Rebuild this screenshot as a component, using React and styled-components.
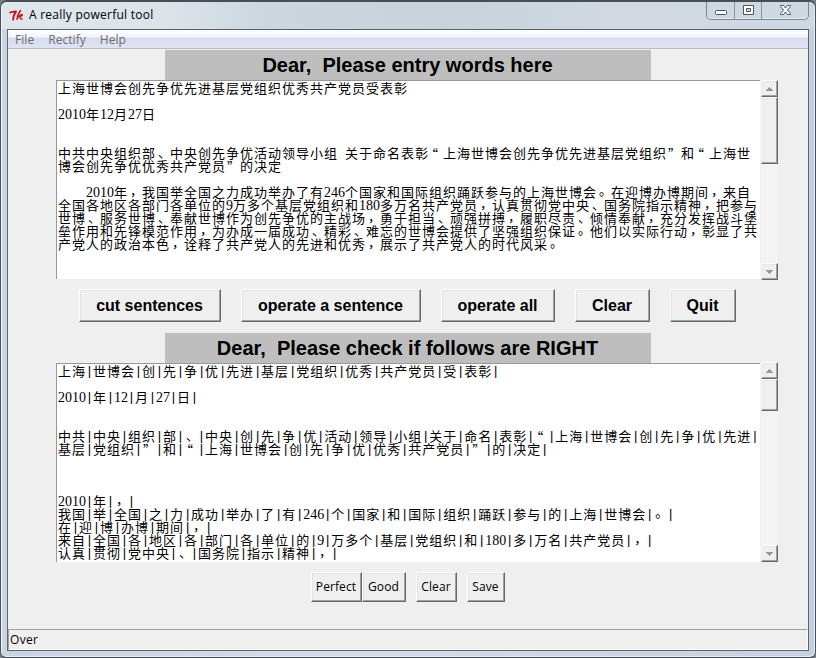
import React from "react";
import styled, { createGlobalStyle } from "styled-components";

const GlobalStyle = createGlobalStyle`
  * { box-sizing: border-box; }
  html, body { margin: 0; padding: 0; overflow: hidden; background: #777f88; }
`;

const Window = styled.div`
  width: 816px;
  height: 658px;
  padding: 0 6px 6px;
  display: flex;
  flex-direction: column;
  background: linear-gradient(90deg, #c9d5e0 0%, #d3dde6 45%, #c5d1dc 100%);
  border: 1px solid #4b525b;
  border-top: 2px solid #4a4d55;
  border-bottom-color: #454b55;
  border-radius: 7px 7px 6px 6px;
  box-shadow: inset 1px 1px 0 #eef4f8, inset -1px -1px 0 #e4edf4;
  font-family: "Open Sans", "Noto Sans", sans-serif;
`;

const TitleBar = styled.header`
  height: 27px;
  flex: none;
  display: flex;
  align-items: flex-start;
  margin: 0 -5px;
  padding-left: 7px;
  border-radius: 5px 5px 0 0;
  background: linear-gradient(90deg, #dfe6ec 0, #dce4ea 20%, #cbd6df 33%, #c7d2dc 55%, #d0d9e2 75%, #ced8e1 100%);
`;

const TitleIcon = styled.svg`
  width: 15px;
  height: 13px;
  margin: 7px 5px 0 0;
`;

const Title = styled.h1`
  flex: 1;
  margin: 0;
  font-size: 12px;
  font-weight: 400;
  line-height: 16px;
  padding-top: 5px;
  color: #000;
  letter-spacing: 0.25px;
`;

const Controls = styled.div`
  display: flex;
  height: 18px;
  margin-right: 5px;
  border: 1px solid #7d8791;
  border-top: 0;
  border-radius: 0 0 5px 5px;
  box-shadow: inset 0 -1px 0 #e3eaf0;
`;

const Control = styled.span`
  width: ${(p) => p.$width}px;
  display: flex;
  justify-content: center;
  padding-left: 1px;
  border-left: ${(p) => (p.$first ? "0" : "1px solid #8b959f")};
`;

const Client = styled.main`
  flex: 1;
  min-height: 0;
  display: flex;
  flex-direction: column;
  background: #efefef;
  border: 1px solid #5c656f;
  border-top-color: #59616a;
`;

const MenuBar = styled.nav`
  height: 19px;
  flex: none;
  display: flex;
  border-bottom: 1px solid #b9bcc4;
  background: linear-gradient(#ffffff 0, #f2f4fa 7px, #d7dcee 8px, #dfe3f2 18px);
`;

const MenuItem = styled.span`
  font-size: 12px;
  line-height: 20px;
  color: #6d6d6d;
  margin-left: ${(p) => p.$gap}px;
  letter-spacing: 0.05px;
`;

const Body = styled.div`
  flex: 1;
  min-height: 0;
  padding-top: 1px;
  display: flex;
  flex-direction: column;
`;

const Banner = styled.h2`
  width: 486px;
  height: 30px;
  flex: none;
  margin: 0 0 0 157px;
  padding-right: 1px;
  background: #bebebe;
  text-align: center;
  white-space: pre;
  font: bold 20px/30px "Liberation Sans", Arial, sans-serif;
  color: #000;
`;

const EditorRow = styled.section`
  display: flex;
  gap: 1px;
  height: 199px;
  flex: none;
  margin-left: 48px;
`;

const Editor = styled.div`
  width: 704px;
  height: 199px;
  background: #fff;
  border-top: 1px solid #989898;
  border-left: 1px solid #989898;
  padding-left: 1px;
  color: #000;
  font: 13px/13px "Noto Sans CJK SC", sans-serif;
`;

const Line = styled.div`
  height: 13px;
  white-space: pre;
  line-height: 13px;
`;

const Wide = styled.span`
  letter-spacing: 1px;
`;

const Glyph = styled.span`
  display: inline-block;
  width: 14px;
  height: 13px;
  text-indent: ${(p) => p.$shift}px;
  vertical-align: top;
  line-height: ${(p) => p.$leading}px;
`;

const Half = styled.span`
  font: 14px/13px "Liberation Serif", serif;
`;

const Bar = styled.span`
  display: inline-block;
  width: 7px;
  height: 13px;
  text-align: center;
  vertical-align: top;
  font: 13px/13px "Liberation Sans", sans-serif;
`;

const HalfSpace = styled.span`
  display: inline-block;
  width: 7px;
`;

const Scroll = styled.div`
  width: 17px;
  height: 200px;
  margin-top: ${(p) => p.$lift}px;
  display: flex;
  flex-direction: column;
  background: repeating-conic-gradient(#ececec 0 25%, #fafafa 0 50%) 0 0 / 2px 2px;
`;

const ScrollButton = styled.span`
  height: 17px;
  flex: none;
  display: flex;
  align-items: center;
  justify-content: center;
  background: #efefef;
  border: 1px solid #fdfdfd;
  border-right-color: #696969;
  border-bottom-color: #696969;
  box-shadow: inset -1px -1px 0 #a0a0a0, inset 1px 1px 0 #e6e6e6;
  margin-top: ${(p) => (p.$end ? "auto" : 0)};
`;

const Thumb = styled(ScrollButton)`
  height: ${(p) => p.$size}px;
`;

const MainButtons = styled.div`
  display: flex;
  gap: 20px;
  margin: 10px 0 11px 71px;
`;

const Button = styled.button`
  width: ${(p) => p.$width}px;
  height: 33px;
  padding: 0 1px 0 0;
  border: 1px solid #fff;
  border-right-color: #696969;
  border-bottom-color: #696969;
  border-radius: 0;
  box-shadow: inset -1px -1px 0 #a0a0a0, inset 1px 1px 0 #e3e3e3;
  background: #efefef;
  color: #000;
  text-align: center;
  white-space: nowrap;
  font: bold 16px/29px "Liberation Sans", Arial, sans-serif;
`;

const SmallButtons = styled.div`
  display: flex;
  margin: 10px 0 0 303px;
`;

const SmallButton = styled(Button)`
  height: 30px;
  margin-left: ${(p) => p.$gap || 0}px;
  font: 12px/26px "Open Sans", sans-serif;
  letter-spacing: 0.1px;
`;

const Status = styled.footer`
  height: 21px;
  flex: none;
  border-top: 1px solid #a0a0a0;
  border-left: 1px solid #a0a0a0;
  border-right: 1px solid #fff;
  border-bottom: 1px solid #fff;
  font-size: 12px;
  line-height: 20px;
  padding-left: 1px;
  color: #000;
  letter-spacing: 0.3px;
`;

const Arrow = ({ down }) => (
  <svg width="7" height="4" viewBox="0 0 7 4" shapeRendering="crispEdges">
    <path d={down ? "M0 0h7L3.5 4z" : "M3.5 0L7 4H0z"} fill="#969696" />
  </svg>
);

const PUNCTUATION = {
  "“": { shift: -4, leading: 15 },
  "”": { shift: 1, leading: 15 },
  "，": { shift: 2, leading: 10 },
  "、": { shift: 2, leading: 11 },
  "。": { shift: 2, leading: 10 },
};

const renderRun = (run, i) => {
  if (run === "|") return <Bar key={i}>|</Bar>;
  if (run === " ") return <HalfSpace key={i}> </HalfSpace>;
  if (/^\d/.test(run)) return <Half key={i}>{run}</Half>;
  const mark = PUNCTUATION[run];
  if (mark) {
    return (
      <Glyph key={i} $shift={mark.shift} $leading={mark.leading}>
        {run}
      </Glyph>
    );
  }
  return <Wide key={i}>{run}</Wide>;
};

const TextArea = ({ lines, thumb, lift = 0 }) => (
  <EditorRow>
    <Editor>
      {lines.map((line, i) => (
        <Line key={i}>
          {(line.match(/\||\x20|\d+|[“”，、。]|[^|\x20\d“”，、。]+/g) || []).map(renderRun)}
        </Line>
      ))}
    </Editor>
    <Scroll $lift={lift}>
      <ScrollButton><Arrow /></ScrollButton>
      <Thumb $size={thumb} />
      <ScrollButton $end><Arrow down /></ScrollButton>
    </Scroll>
  </EditorRow>
);

const SOURCE = [
  "上海世博会创先争优先进基层党组织优秀共产党员受表彰",
  "",
  "2010年12月27日",
  "",
  "",
  "中共中央组织部、中央创先争优活动领导小组 关于命名表彰“上海世博会创先争优先进基层党组织”和“上海世",
  "博会创先争优优秀共产党员”的决定",
  "",
  "    2010年，我国举全国之力成功举办了有246个国家和国际组织踊跃参与的上海世博会。在迎博办博期间，来自",
  "全国各地区各部门各单位的9万多个基层党组织和180多万名共产党员，认真贯彻党中央、国务院指示精神，把参与",
  "世博、服务世博、奉献世博作为创先争优的主战场，勇于担当、顽强拼搏，履职尽责、倾情奉献，充分发挥战斗堡",
  "垒作用和先锋模范作用，为办成一届成功、精彩、难忘的世博会提供了坚强组织保证。他们以实际行动，彰显了共",
  "产党人的政治本色，诠释了共产党人的先进和优秀，展示了共产党人的时代风采。",
];

const RESULT = [
  "上海|世博会|创|先|争|优|先进|基层|党组织|优秀|共产党员|受|表彰|",
  "",
  "2010|年|12|月|27|日|",
  "",
  "",
  "中共|中央|组织|部|、|中央|创|先|争|优|活动|领导|小组|关于|命名|表彰|“|上海|世博会|创|先|争|优|先进|",
  "基层|党组织|”|和|“|上海|世博会|创|先|争|优|优秀|共产党员|”|的|决定|",
  "",
  "",
  "",
  "2010|年|，|",
  "我国|举|全国|之|力|成功|举办|了|有|246|个|国家|和|国际|组织|踊跃|参与|的|上海|世博会|。|",
  "在|迎|博|办博|期间|，|",
  "来自|全国|各|地区|各|部门|各|单位|的|9|万多个|基层|党组织|和|180|多|万名|共产党员|，|",
  "认真|贯彻|党中央|、|国务院|指示|精神|，|",
];

export default function App() {
  return (
    <>
      <GlobalStyle />
      <Window>
        <TitleBar>
          <TitleIcon viewBox="0 0 15 13" fill="none" stroke="#c5131b">
            <path d="M0.8 4.2C1.6 1.8 4 3.6 7.4 2.2C5.4 4.6 4.2 7.5 4 11.4" strokeWidth="1.8" />
            <path d="M12 1.4C9.6 3.5 8.3 7 8 11" strokeWidth="1.4" />
            <path d="M8.4 8.8C10 5.8 13.6 4.6 13.4 6C13 7.4 11 7.4 10.2 7.4C11.2 9.6 12 11 13.6 9.4" strokeWidth="1.3" />
          </TitleIcon>
          <Title>A really powerful tool</Title>
          <Controls>
            <Control $first $width={27}>
              <svg width="13" height="18" viewBox="0 0 13 18">
                <rect x="0.5" y="8.5" width="11" height="4" rx="1" fill="#fff" stroke="#4d535d" />
              </svg>
            </Control>
            <Control $width={27}>
              <svg width="13" height="18" viewBox="0 0 13 18">
                <path d="M1.5 3.5h10v9h-10z M4.5 6.5v3h4v-3z" fill="#fff" fillRule="evenodd" stroke="#4d535d" />
              </svg>
            </Control>
            <Control $width={47}>
              <svg width="13" height="18" viewBox="0 0 13 18">
                <path
                  d="M1.5 3.5h3L6.5 6l2-2.5h3v1L8.5 8l3 3.5v1h-3L6.5 10l-2 2.5h-3v-1L4.5 8l-3-3.5z"
                  fill="#fff"
                  stroke="#4d535d"
                />
              </svg>
            </Control>
          </Controls>
        </TitleBar>
        <Client>
          <MenuBar>
            <MenuItem $gap={7}>File</MenuItem>
            <MenuItem $gap={14}>Rectify</MenuItem>
            <MenuItem $gap={14}>Help</MenuItem>
          </MenuBar>
          <Body>
            <Banner>{"Dear,  Please entry words here"}</Banner>
            <TextArea lines={SOURCE} thumb={67} />
            <MainButtons>
              <Button $width={142}>cut sentences</Button>
              <Button $width={180}>operate a sentence</Button>
              <Button $width={114}>operate all</Button>
              <Button $width={75}>Clear</Button>
              <Button $width={66}>Quit</Button>
            </MainButtons>
            <Banner>{"Dear,  Please check if follows are RIGHT"}</Banner>
            <TextArea lines={RESULT} thumb={32} lift={-1} />
            <SmallButtons>
              <SmallButton $width={51}>Perfect</SmallButton>
              <SmallButton $width={44}>Good</SmallButton>
              <SmallButton $width={41} $gap={10}>Clear</SmallButton>
              <SmallButton $width={38} $gap={10}>Save</SmallButton>
            </SmallButtons>
          </Body>
          <Status>Over</Status>
        </Client>
      </Window>
    </>
  );
}
